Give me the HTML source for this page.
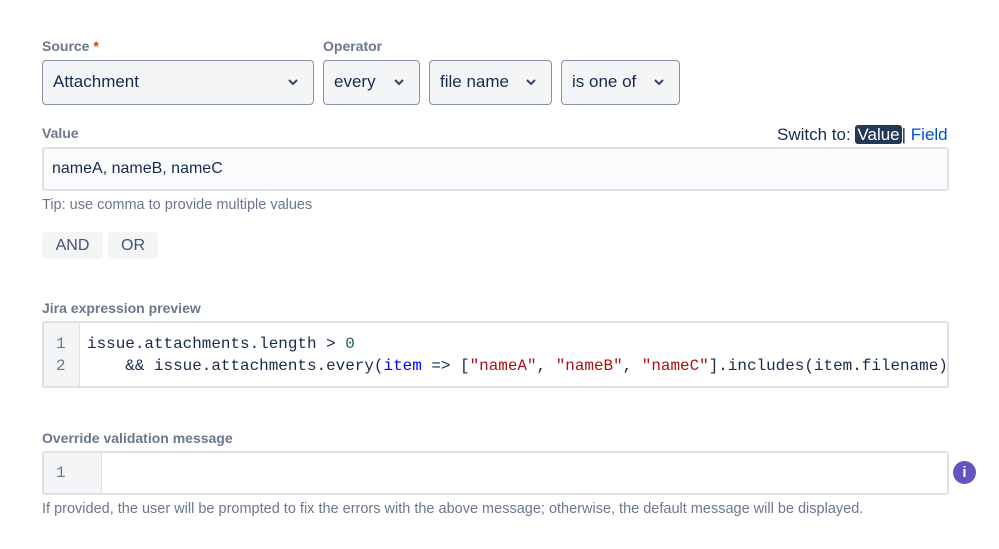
<!DOCTYPE html>
<html><head><meta charset="utf-8"><style>
*{box-sizing:border-box;margin:0;padding:0}
body{width:999px;height:549px;background:#fff;font-family:"Liberation Sans",sans-serif;position:relative;overflow:hidden;color:#172b4d}
.a{position:absolute}
.lbl{font-size:14px;font-weight:bold;color:#6b778c}
.sel{position:absolute;top:60px;height:45px;background:#f4f5f7;border:1.5px solid #8993a4;border-radius:4px;font-size:17px;line-height:42px;padding-left:10px;color:#172b4d}
.sel svg{position:absolute;top:16px}
.inp{position:absolute;left:42px;width:907px;border:2px solid #dfe1e6;border-radius:3px}
.btn{position:absolute;top:232px;height:27px;background:#f4f5f7;border-radius:3px;font-size:16px;line-height:27px;text-align:center;color:#42526e}
.mono{font-family:"Liberation Mono",monospace;font-size:15.95px}
.help{font-size:14.5px;color:#6b778c}
</style></head><body>
<div class="a lbl" style="left:42px;top:38px">Source<span style="color:#de350b"> *</span></div>
<div class="a lbl" style="left:323px;top:38px">Operator</div>
<div class="sel" style="left:42px;width:272px">Attachment<svg style="left:244px" width="12" height="10" viewBox="0 0 12 10"><path d="M2 3l4 4 4-4" stroke="#344563" stroke-width="2" fill="none"/></svg></div>
<div class="sel" style="left:323px;width:97px">every<svg style="left:69px" width="12" height="10" viewBox="0 0 12 10"><path d="M2 3l4 4 4-4" stroke="#344563" stroke-width="2" fill="none"/></svg></div>
<div class="sel" style="left:429px;width:123px">file name<svg style="left:95px" width="12" height="10" viewBox="0 0 12 10"><path d="M2 3l4 4 4-4" stroke="#344563" stroke-width="2" fill="none"/></svg></div>
<div class="sel" style="left:561px;width:119px">is one of<svg style="left:91px" width="12" height="10" viewBox="0 0 12 10"><path d="M2 3l4 4 4-4" stroke="#344563" stroke-width="2" fill="none"/></svg></div>
<div class="a lbl" style="left:42px;top:125px">Value</div>
<div class="a" style="left:777px;top:125px;font-size:17px;color:#172b4d">Switch to: <span style="background:#253858;color:#fff;border-radius:3px;padding:0 2px">Value</span>| <span style="color:#0052cc">Field</span></div>
<div class="inp" style="top:147px;height:44px;background:#fafbfc;font-size:16px;line-height:40px;padding-left:8px">nameA, nameB, nameC</div>
<div class="a help" style="left:42px;top:197px">Tip: use comma to provide multiple values</div>
<div class="btn" style="left:42px;width:61px">AND</div>
<div class="btn" style="left:108px;width:50px">OR</div>
<div class="a lbl" style="left:42px;top:300px">Jira expression preview</div>
<div class="inp" style="top:321px;height:67px;background:#fff">
<div class="a" style="left:0;top:0;width:36px;height:63px;background:#f4f5f7;border-right:1px solid #dfe1e6"></div>
<div class="a mono" style="left:12px;top:10px;line-height:22px;color:#6b778c">1<br>2</div>
<pre class="a mono" style="left:43px;top:10px;line-height:22px;color:#172b4d">issue.attachments.length &gt; <span style="color:#116644">0</span>
    &amp;&amp; issue.attachments.every(<span style="color:#0000ff">item</span> =&gt; [<span style="color:#aa1111">"nameA"</span>, <span style="color:#aa1111">"nameB"</span>, <span style="color:#aa1111">"nameC"</span>].includes(item.filename)</pre>
</div>
<div class="a lbl" style="left:42px;top:430px">Override validation message</div>
<div class="inp" style="top:451px;height:44px;background:#fff">
<div class="a" style="left:0;top:0;width:58px;height:40px;background:#f4f5f7;border-right:1px solid #dfe1e6"></div>
<div class="a mono" style="left:12px;top:9px;line-height:22px;color:#6b778c">1</div>
</div>
<div class="a" style="left:953px;top:461px;width:23px;height:23px;border-radius:50%;background:#6554c0;color:#fff;font-size:15px;font-weight:bold;text-align:center;line-height:23px">i</div>
<div class="a help" style="left:42px;top:501px">If provided, the user will be prompted to fix the errors with the above message; otherwise, the default message will be displayed.</div>
</body></html>
